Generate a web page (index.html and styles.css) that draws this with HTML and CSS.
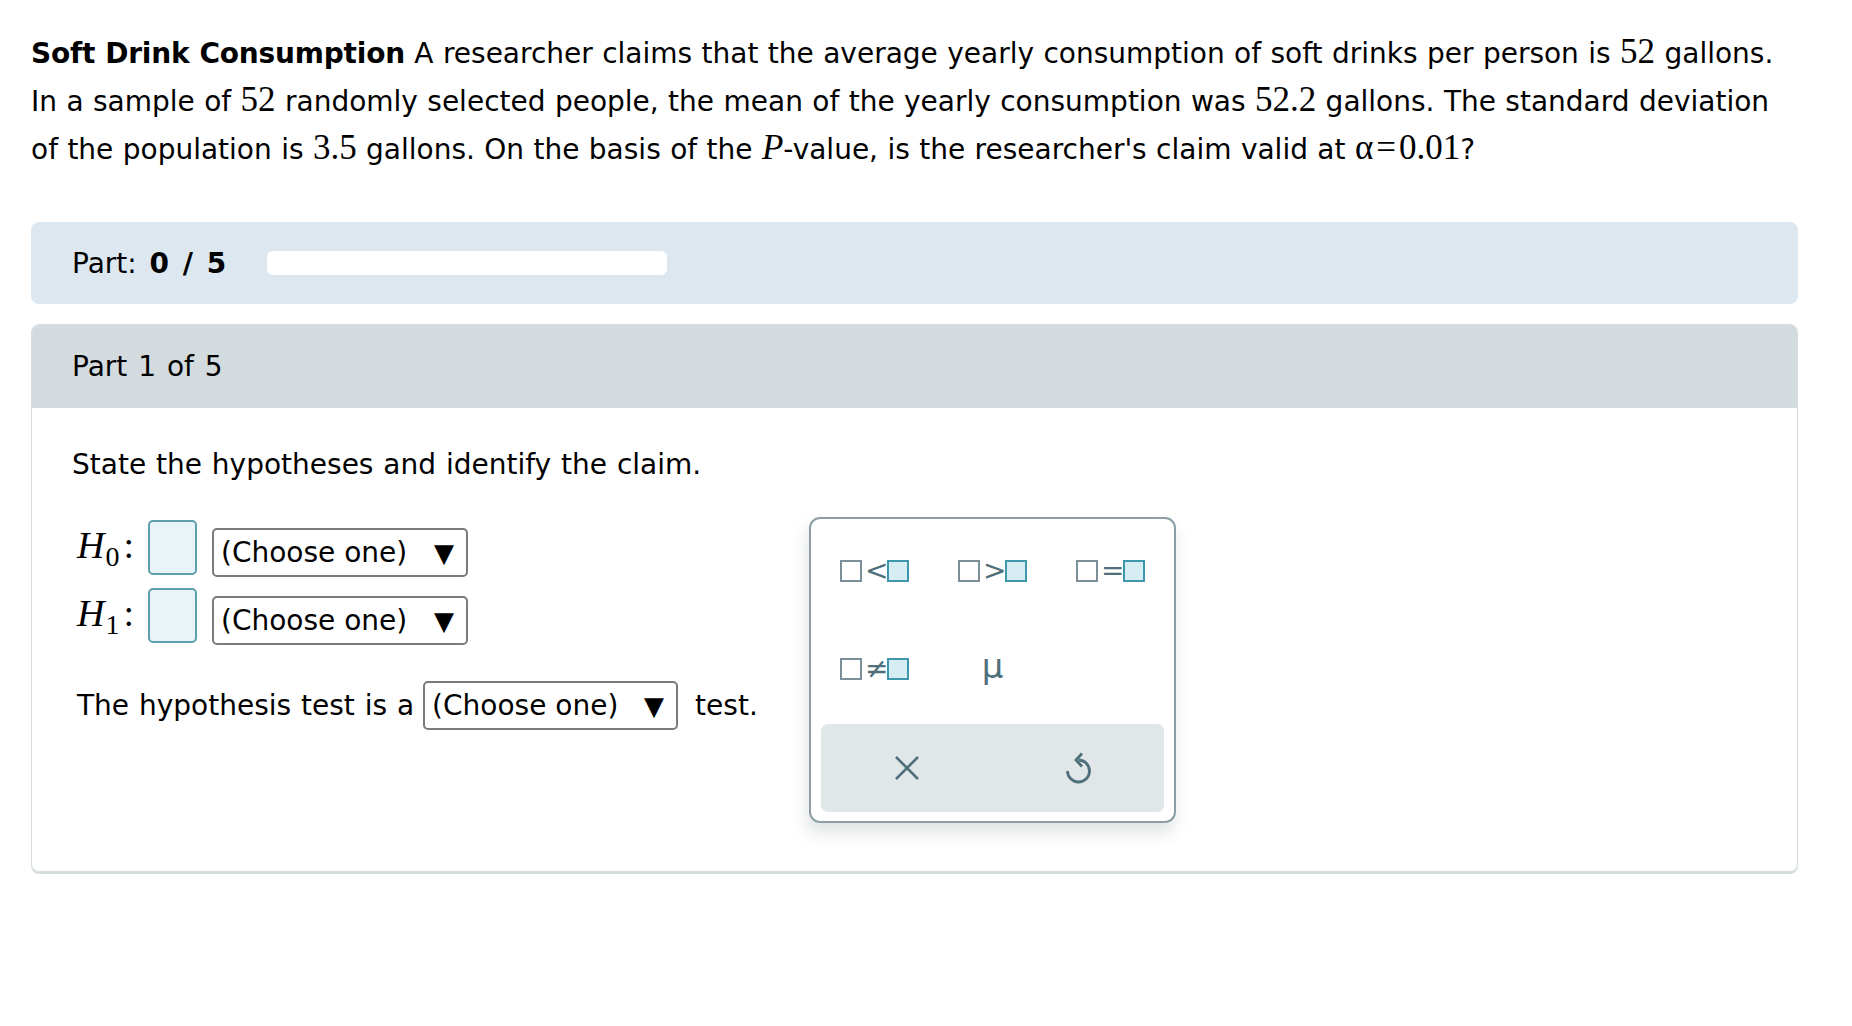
FILE: index.html
```html
<!DOCTYPE html>
<html lang="en">
<head>
<meta charset="utf-8">
<title>Soft Drink Consumption</title>
<link rel="stylesheet" href="styles.css">
</head>
<body>
<div class="page">
  <p class="problem"><b>Soft Drink Consumption</b> A researcher claims that the average yearly consumption of soft drinks per person is <span class="m">52</span> gallons.<br>In a sample of <span class="m">52</span> randomly selected people, the mean of the yearly consumption was <span class="m">52.2</span> gallons. The standard deviation<br>of the population is <span class="m">3.5</span> gallons. On the basis of the <i class="m">P</i>-value, is the researcher's claim valid at <span class="m">α<span class="eq">=</span>0.01</span>?</p>

  <div class="partbar">
    <span class="partlabel">Part: <b>0 / 5</b></span>
    <div class="progress"></div>
  </div>

  <div class="card">
    <div class="card-head">Part 1 of 5</div>
    <div class="card-body">
      <p class="instr">State the hypotheses and identify the claim.</p>
      <div class="work">
        <div class="left">
          <div class="hrow">
            <span class="hlabel"><i>H</i><sub>0</sub><span class="colon">:</span></span>
            <span class="ansbox"></span>
            <span class="select">(Choose one)<span class="tri">▼</span></span>
          </div>
          <div class="hrow">
            <span class="hlabel"><i>H</i><sub>1</sub><span class="colon">:</span></span>
            <span class="ansbox"></span>
            <span class="select">(Choose one)<span class="tri">▼</span></span>
          </div>
          <div class="testrow">
            <span>The hypothesis test is a</span>
            <span class="select select-test">(Choose one)<span class="tri">▼</span></span>
            <span class="after">test.</span>
          </div>
        </div>

        <div class="keypad">
          <div class="keys">
            <div class="key"><span class="sq"></span><span class="op">&lt;</span><span class="sq sq-on"></span></div>
            <div class="key"><span class="sq"></span><span class="op">&gt;</span><span class="sq sq-on"></span></div>
            <div class="key"><span class="sq"></span><span class="op">=</span><span class="sq sq-on"></span></div>
            <div class="key"><span class="sq"></span><span class="op">≠</span><span class="sq sq-on"></span></div>
            <div class="key"><span class="mu">μ</span></div>
            <div class="key"></div>
          </div>
          <div class="actions">
            <div class="action">
              <svg width="26" height="26" viewBox="0 0 26 26"><path d="M2 2 L24 24 M24 2 L2 24" stroke="#4f6f7a" stroke-width="2.6" fill="none"/></svg>
            </div>
            <div class="action">
              <svg width="30" height="36" viewBox="0 0 30 36"><path d="M15.5 10 A11 11 0 1 1 4.5 21" stroke="#4f6f7a" stroke-width="2.8" fill="none"/><path d="M19 3.5 L13 10 L19 16.5" stroke="#4f6f7a" stroke-width="2.8" fill="none"/></svg>
            </div>
          </div>
        </div>
      </div>
    </div>
  </div>
</div>
</body>
</html>
```

FILE: styles.css
```css
* { box-sizing: border-box; }

body {
  margin: 0;
  font-family: "DejaVu Sans", Verdana, sans-serif;
  font-size: 28px;
  word-spacing: 1px;
  color: #000;
  background: #fff;
}

.page {
  padding: 30px 54px 40px 31px;
}

.problem {
  margin: 0;
  line-height: 48px;
  white-space: nowrap;
  word-spacing: 0.5px;
}

.problem b {
  letter-spacing: -0.2px;
}

.m {
  font-family: "Liberation Serif", "Times New Roman", serif;
  font-size: 35px;
  line-height: 1;
}

.eq {
  margin: 0 3px;
}

.partbar {
  margin-top: 48px;
  height: 82px;
  background: #dde7f0;
  border-radius: 8px;
  display: flex;
  align-items: center;
  padding-left: 41px;
}

.partlabel {
  word-spacing: 4px;
}

.progress {
  width: 400px;
  height: 24px;
  background: #fff;
  border-radius: 6px;
  margin-left: 41px;
}

.card {
  margin-top: 20px;
  border: 1px solid #d6dde1;
  border-radius: 8px;
  box-shadow: 0 2px 0 #d3dbdf;
  overflow: hidden;
}

.card-head {
  background: #d3dbdf;
  height: 83px;
  display: flex;
  align-items: center;
  padding-left: 40px;
  word-spacing: 2px;
}

.card-body {
  padding: 39px 40px 48px 40px;
}

.instr {
  margin: 0;
  line-height: 36px;
}

.work {
  margin-top: 34px;
  display: flex;
  align-items: flex-start;
}

.left {
  width: 737px;
  padding-left: 5px;
}

.hrow {
  height: 68px;
  display: flex;
  align-items: flex-start;
}

.hlabel {
  font-family: "Liberation Serif", "Times New Roman", serif;
  font-size: 38px;
  width: 71px;
  margin-top: 6px;
  line-height: 44px;
  white-space: nowrap;
}

.hlabel i {
  margin-right: 1px;
}

.hlabel sub {
  font-size: 28px;
  font-style: normal;
  vertical-align: -8px;
  line-height: 0;
}

.colon {
  margin-left: 4px;
}

.ansbox {
  width: 49px;
  height: 55px;
  margin-top: 3px;
  border: 2px solid #5e9fae;
  background: #e9f4f8;
  border-radius: 5px;
}

.select {
  width: 256px;
  height: 49px;
  margin-top: 11px;
  margin-left: 15px;
  border: 2px solid #7b7b7b;
  border-radius: 5px;
  background: #fff;
  display: flex;
  align-items: center;
  padding: 0 12px 0 7px;
  white-space: nowrap;
  word-spacing: 0;
}

.tri {
  margin-left: auto;
  font-size: 26px;
}

.testrow {
  margin-top: 28px;
  display: flex;
  align-items: center;
  white-space: nowrap;
}

.select-test {
  width: 255px;
  margin: 0 0 0 9px;
}

.after {
  margin-left: 17px;
}

.keypad {
  width: 367px;
  height: 306px;
  border: 2px solid #8c9fa8;
  border-radius: 11px;
  background: #fff;
  box-shadow: -2px 10px 16px rgba(60, 80, 90, 0.16);
  padding: 3px 10px 10px 10px;
}

.keys {
  display: grid;
  grid-template-columns: repeat(3, 118px);
  grid-template-rows: repeat(2, 98px);
  justify-content: center;
}

.key {
  display: flex;
  align-items: center;
  justify-content: center;
  gap: 3px;
  color: #4f6f7a;
}

.sq {
  width: 22px;
  height: 22px;
  border: 2.5px solid #7a8f98;
  background: #fff;
}

.sq-on {
  border-color: #3f97ae;
  background: #d6eef3;
}

.op {
  font-size: 28px;
  line-height: 22px;
  width: 19px;
  text-align: center;
}

.mu {
  font-size: 34px;
  line-height: 34px;
  margin-top: -6px;
}

.actions {
  margin-top: 6px;
  height: 88px;
  background: #e1e6e9;
  border-radius: 7px;
  display: flex;
}

.action {
  flex: 1;
  display: flex;
  align-items: center;
  justify-content: center;
}
```
